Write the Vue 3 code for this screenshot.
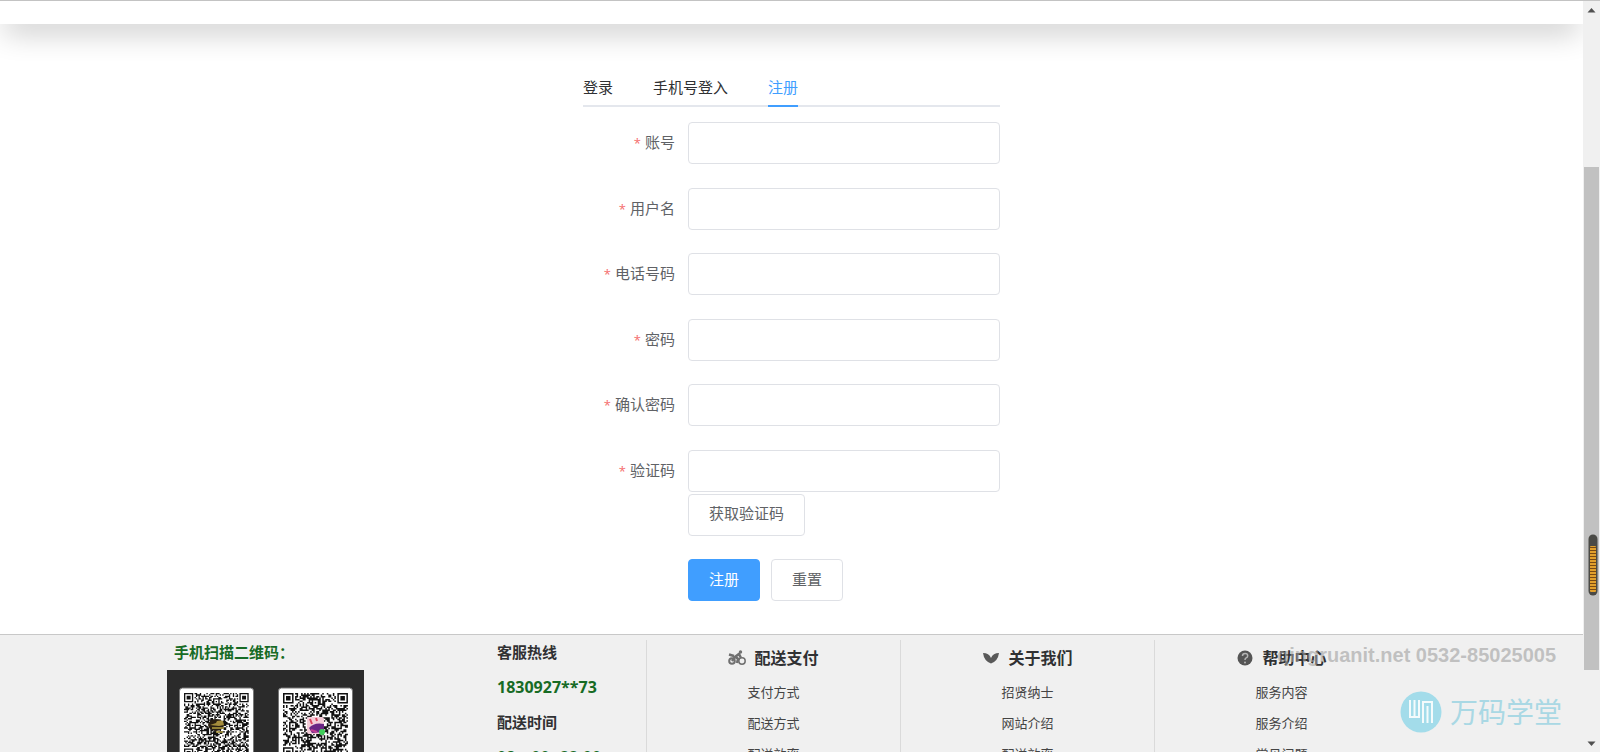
<script setup>
import { ref } from 'vue'

const tabs = ['登录', '手机号登入', '注册']
const activeTab = ref('注册')

const fields = [
  { id: 'account', label: '账号', type: 'text' },
  { id: 'username', label: '用户名', type: 'text' },
  { id: 'phone', label: '电话号码', type: 'tel' },
  { id: 'password', label: '密码', type: 'password' },
  { id: 'confirm', label: '确认密码', type: 'password' },
]

const columns = [
  { title: '配送支付', icon: 'bike', links: ['支付方式', '配送方式', '配送效率'] },
  { title: '关于我们', icon: 'leaf', links: ['招贤纳士', '网站介绍', '配送效率'] },
  { title: '帮助中心', icon: 'help', links: ['服务内容', '服务介绍', '常见问题'] },
]

// Builds the dark modules of a QR-like matrix as one path, n modules per side.
function qrPath(n, seed) {
  let s = seed
  const rand = () => {
    s = (s * 1103515245 + 12345) % 2147483648
    return s / 2147483648
  }
  const grid = Array.from({ length: n }, () => Array.from({ length: n }, () => rand() < 0.5))
  const square = (cx, cy, rings, r) => {
    for (let y = -r; y <= r; y++) {
      for (let x = -r; x <= r; x++) {
        if (grid[cy + y] && grid[cy + y][cx + x] !== undefined) {
          grid[cy + y][cx + x] = rings.includes(Math.max(Math.abs(x), Math.abs(y)))
        }
      }
    }
  }
  const mid = (n - 1) / 2
  square(mid, 6, [0, 2], 2)
  square(6, mid, [0, 2], 2)
  square(n - 7, mid, [0, 2], 2)
  square(3, 3, [0, 1, 3], 4)
  square(n - 4, 3, [0, 1, 3], 4)
  square(3, n - 4, [0, 1, 3], 4)
  let d = ''
  grid.forEach((row, y) => row.forEach((on, x) => {
    if (on) d += `M${x} ${y}h1v1h-1z`
  }))
  return d
}
const qrA = qrPath(49, 71)
const qrB = qrPath(43, 2024)
</script>

<template>
  <div class="page">
    <div class="view">
      <header class="top"></header>

      <main class="panel">
        <nav class="tabs">
          <button
            v-for="t in tabs"
            :key="t"
            type="button"
            class="tab"
            :class="{ active: t === activeTab }"
            @click="activeTab = t"
          >{{ t }}</button>
        </nav>

        <form class="form" @submit.prevent>
          <div v-for="f in fields" :key="f.id" class="row">
            <label class="label" :for="f.id"><span class="star">*</span>{{ f.label }}</label>
            <input :id="f.id" class="input" :type="f.type" />
          </div>
          <div class="row">
            <label class="label" for="code"><span class="star">*</span>验证码</label>
            <div class="stack">
              <input id="code" class="input" type="text" />
              <button type="button" class="btn">获取验证码</button>
            </div>
          </div>
          <div class="actions">
            <button type="submit" class="btn primary">注册</button>
            <button type="reset" class="btn">重置</button>
          </div>
        </form>
      </main>

      <footer class="footer">
        <div class="inner">
          <section class="scan">
            <h4 class="green scan-title">手机扫描二维码：</h4>
            <svg class="codes" viewBox="0 0 197 110" width="197" height="110">
              <rect width="197" height="110" fill="#2b2b2b" />
              <rect x="12.500" y="18" width="74" height="88" rx="3" fill="#fff" stroke="#777" />
              <rect x="111.500" y="18" width="74" height="88" rx="3" fill="#fff" stroke="#777" />
              <path :d="qrA" fill="#111" transform="translate(17 23) scale(1.320)" />
              <path :d="qrB" fill="#111" transform="translate(116 23) scale(1.510)" />
              <g>
                <ellipse cx="49" cy="55" rx="8" ry="6" fill="#2a2013" />
                <path d="M50 51q4-1 6 0l1 4-5 1-9-1 6-2z" fill="#a58d3c" />
                <path d="M45 58h12M49 62h7" stroke="#b5a040" stroke-width="1.500" />
              </g>
              <g>
                <rect x="140" y="47" width="17" height="17" rx="2" fill="#f4ccd8" />
                <path d="M142 58q5-6 15-4v8l-12 1z" fill="#6b2585" />
                <path d="M143 49l2 5M149 48l1 3" stroke="#d9435f" stroke-width="2" />
                <path d="M144 60l6 2" stroke="#c23c92" stroke-width="2" />
                <circle cx="155" cy="62" r="3" fill="#3fce5a" />
              </g>
            </svg>
          </section>

          <section class="hotline">
            <h4>客服热线</h4>
            <p class="green">1830927**73</p>
            <h4>配送时间</h4>
            <p class="green">08：00--22:00</p>
          </section>

          <section v-for="c in columns" :key="c.title" class="column">
            <h3 class="heading">
              <svg v-if="c.icon === 'bike'" class="icon" viewBox="0 0 18 18" fill="none" stroke="#707070">
                <circle cx="4" cy="11" r="2.800" stroke-width="2" />
                <circle cx="14" cy="11" r="3.200" stroke-width="1.500" />
                <path d="M1 4.500l5 1.500M4 11l3-4 4-3 2 4M7 6l3 3-1 4" stroke-width="2.500" />
                <circle cx="12.500" cy="2" r="1.700" fill="#707070" stroke="none" />
              </svg>
              <svg v-else-if="c.icon === 'leaf'" class="icon" viewBox="0 0 18 18" fill="#595959">
                <path d="M9 13.500Q2 11 1 3q6 0 8 5 2-5 8-5-1 8-8 10.500z" />
              </svg>
              <svg v-else class="icon" viewBox="0 0 18 18">
                <circle cx="9" cy="8" r="7.500" fill="#555" />
                <path d="M6.500 6q0-2.500 2.600-2.500t2.600 2.200q0 1.500-1.500 2.200-1.200.6-1.200 2" fill="none" stroke="#b4b4b4" stroke-width="1.500" />
                <circle cx="9" cy="12.500" r="1" fill="#b4b4b4" />
              </svg>
              {{ c.title }}
            </h3>
            <ul class="links">
              <li v-for="l in c.links" :key="l"><a href="#">{{ l }}</a></li>
            </ul>
          </section>
        </div>
      </footer>
    </div>

    <div class="scrollbar" aria-hidden="true">
      <svg class="arrow" viewBox="0 0 17 17"><path d="M4.500 11.500h8L8.500 7z" fill="#505050" /></svg>
      <div class="thumb"></div>
      <svg class="arrow" viewBox="0 0 17 17"><path d="M4.500 6.500h8L8.500 11z" fill="#505050" /></svg>
    </div>

    <svg class="gauge" viewBox="0 0 10 62" width="10" height="62" aria-hidden="true">
      <rect x="0.500" y="0.500" width="9" height="61" rx="4.500" fill="#4a4a46" />
      <rect x="2" y="12" width="6" height="46" rx="1" fill="#e2a02c" />
      <path v-for="i in 15" :key="i" :d="`M2 ${10.5 + i * 3}h6`" stroke="#7a4a12" />
    </svg>

    <div class="contact">qingruanit.net 0532-85025005</div>
    <div class="brand">
      <svg viewBox="0 0 42 42" width="42" height="42">
        <circle cx="21" cy="21" r="20.500" fill="#a3dcea" />
        <g fill="none" stroke="#f4fbfc" stroke-width="2">
          <path d="M10 9v17h9M14.500 9v17M19 9v18" />
          <path d="M23 32V11h9v21M27.500 15v17" />
        </g>
      </svg>
      <span>万码学堂</span>
    </div>
  </div>
</template>

<style>
body {
  margin: 0;
  overflow: hidden;
}
</style>

<style scoped>
.page {
  position: relative;
  display: flex;
  height: 100vh;
  overflow: hidden;
  background: #fff;
  color: #303133;
  font-family: "Open Sans", "Noto Sans CJK SC", sans-serif;
  font-size: 15px;
}
.page * {
  box-sizing: border-box;
}
.view {
  flex: 1;
  min-width: 0;
  overflow: hidden;
  display: flex;
  flex-direction: column;
}
.top {
  flex: none;
  height: 24px;
  border-top: 1px solid #c3c3c3;
  background: #fff;
  box-shadow: 0 10px 30px -4px rgba(0, 0, 0, 0.3);
}
.panel {
  flex: none;
  width: 417px;
  margin: 43px auto 33px;
}
.tabs {
  display: flex;
  gap: 40px;
  height: 40px;
  border-bottom: 2px solid #e4e7ed;
}
.tab {
  height: 40px;
  padding: 0;
  border: 0;
  border-bottom: 2px solid transparent;
  background: none;
  color: #303133;
  font: inherit;
}
.tab.active {
  color: #409eff;
  border-color: #409eff;
}
.form {
  display: flex;
  flex-direction: column;
  justify-content: space-between;
  min-height: 479px;
  margin-top: 15px;
}
.row {
  display: flex;
}
.label {
  width: 105px;
  padding-right: 13px;
  color: #606266;
  line-height: 40px;
  text-align: right;
}
.star {
  margin-right: 4px;
  color: #f56c6c;
  font-size: 13px;
}
.input {
  flex: 1;
  width: 100%;
  min-width: 0;
  min-height: 42px;
  padding: 0 15px;
  border: 1px solid #dfe1e6;
  border-radius: 4px;
  background: #fff;
  font: inherit;
}
.stack {
  flex: 1;
  display: flex;
  flex-direction: column;
  align-items: flex-start;
  gap: 2px;
}
.btn {
  height: 42px;
  padding: 0 20px 4px;
  border: 1px solid #dfe1e6;
  border-radius: 4px;
  background: #fff;
  color: #606266;
  font: inherit;
}
.primary {
  border-color: #409eff;
  background: #409eff;
  color: #fff;
}
.actions {
  display: flex;
  gap: 11px;
  padding-left: 105px;
}
.footer {
  flex: 1 0 auto;
  border-top: 1px solid #c8c8c8;
  background: #f0f0f0;
}
.inner {
  display: flex;
  max-width: 1249px;
  margin: 0 auto;
  padding-right: 8px;
}
.scan {
  flex: 1;
}
.scan-title {
  padding-left: 7px;
}
.codes {
  display: block;
}
.hotline {
  width: 149px;
}
.scan h4,
.hotline h4,
.hotline p {
  margin: 0;
  font-size: 15px;
  font-weight: 700;
  line-height: 35px;
}
.hotline p {
  font-size: 16px;
}
.scan .green,
.hotline .green {
  color: #176b25;
}
.column {
  width: 254px;
  margin-top: 5px;
  border-left: 1px solid #dadada;
}
.heading {
  display: flex;
  justify-content: center;
  align-items: center;
  gap: 8px;
  margin: 0;
  font-size: 16px;
  line-height: 37px;
}
.icon {
  width: 18px;
  height: 18px;
}
.links {
  margin: 0;
  padding: 0;
  list-style: none;
  text-align: center;
  font-size: 13px;
  line-height: 31px;
}
.links a {
  color: #444;
  text-decoration: none;
}
.scrollbar {
  flex: none;
  display: flex;
  flex-direction: column;
  width: 17px;
  border-top: 1px solid #c3c3c3;
  background: #f0f0f0;
}
.arrow {
  flex: none;
  height: 17px;
}
.thumb {
  height: 67%;
  margin: auto 1px 65px;
  background: #c1c1c1;
}
.gauge {
  position: absolute;
  right: 2px;
  top: 534px;
}
.contact {
  position: absolute;
  right: 44px;
  bottom: 85px;
  color: rgba(160, 160, 160, 0.6);
  font: bold 20px/24px "Liberation Sans", sans-serif;
}
.brand {
  position: absolute;
  right: 38px;
  bottom: 19px;
  display: flex;
  align-items: center;
  gap: 8px;
  color: #a9d8e4;
  font-size: 28px;
  line-height: 42px;
}
</style>
